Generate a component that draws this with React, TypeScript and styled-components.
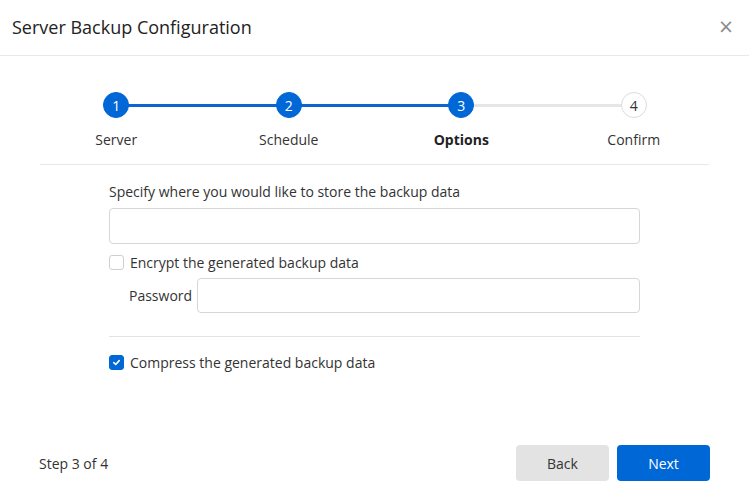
import styled, { createGlobalStyle } from "styled-components";

const GlobalStyle = createGlobalStyle`
  body {
    margin: 0;
    background: #ffffff;
    font-family: "Open Sans", "Noto Sans", sans-serif;
    color: #333333;
  }
`;

const Dialog = styled.div`
  width: 749px;
  height: 504px;
  display: flex;
  flex-direction: column;
  background: #fff;
`;

const Header = styled.div`
  height: 56px;
  box-sizing: border-box;
  display: flex;
  align-items: center;
  justify-content: space-between;
  padding: 0 15px 2px 12px;
  border-bottom: 1px solid #e8e8e8;
`;

const Title = styled.h1`
  margin: 0;
  font-size: 18px;
  font-weight: 400;
  color: #222;
`;

const CloseButton = styled.button`
  border: none;
  background: none;
  padding: 0;
  color: #8a8a8a;
  font-size: 19px;
  line-height: 1;
  cursor: pointer;
  font-family: "DejaVu Sans", sans-serif;
`;

const Body = styled.div`
  flex: 1;
  padding: 36px 40px 0;
  display: flex;
  flex-direction: column;
`;

const StepperWrap = styled.div`
  padding-bottom: 15px;
  border-bottom: 1px solid #e8e8e8;
`;

const Stepper = styled.div`
  display: grid;
  grid-template-columns: repeat(4, 172.5px);
  margin: 0 -10px;
`;

const Step = styled.div`
  display: flex;
  flex-direction: column;
  align-items: center;
  position: relative;
`;

const Connector = styled.div<{ $done: boolean }>`
  position: absolute;
  top: 12px;
  left: 50%;
  width: 100%;
  height: 3px;
  background: ${(p) => (p.$done ? "#0a66cc" : "#e6e6e6")};
`;

const Circle = styled.div<{ $active: boolean }>`
  position: relative;
  z-index: 1;
  width: 26px;
  height: 26px;
  box-sizing: border-box;
  border-radius: 50%;
  display: flex;
  align-items: center;
  justify-content: center;
  font-size: 14px;
  background: ${(p) => (p.$active ? "#0067d6" : "#fff")};
  color: ${(p) => (p.$active ? "#fff" : "#333")};
  border: 1px solid ${(p) => (p.$active ? "#0067d6" : "#dcdcdc")};
`;

const StepLabel = styled.div<{ $current: boolean }>`
  margin-top: 12px;
  font-size: 14px;
  font-weight: ${(p) => (p.$current ? 700 : 400)};
  color: ${(p) => (p.$current ? "#222" : "#333")};
`;

const Form = styled.div`
  width: 531px;
  margin: 17px 0 0 69px;
  display: flex;
  flex-direction: column;
`;

const FieldLabel = styled.label`
  font-size: 14px;
  color: #333;
  margin-bottom: 7px;
`;

const TextInput = styled.input<{ $height: number }>`
  box-sizing: border-box;
  width: 100%;
  height: ${(p) => p.$height}px;
  border: 1px solid #d6d6d6;
  border-radius: 4px;
  background: #fff;
  outline: none;
  font: inherit;
`;

const CheckRow = styled.label<{ $top?: number }>`
  display: flex;
  align-items: center;
  gap: 6px;
  margin-top: ${(p) => p.$top ?? 0}px;
  font-size: 14px;
  color: #333;
`;

const Box = styled.span<{ $checked: boolean }>`
  width: 15px;
  height: 15px;
  box-sizing: border-box;
  border-radius: 3px;
  border: 1px solid ${(p) => (p.$checked ? "#0067d6" : "#cfcfcf")};
  background: ${(p) => (p.$checked ? "#0067d6" : "#fff")};
  display: flex;
  align-items: center;
  justify-content: center;
`;

const PasswordRow = styled.div`
  display: flex;
  align-items: center;
  gap: 5px;
  margin: 6px 0 0 20px;
  font-size: 14px;
  color: #333;
`;

const Divider = styled.hr`
  border: none;
  border-top: 1px solid #e3e3e3;
  margin: 23px 0 16px;
  width: 100%;
`;

const Footer = styled.div`
  height: 94px;
  box-sizing: border-box;
  padding: 12px 39px 0;
  display: flex;
  align-items: center;
  justify-content: space-between;
`;

const StepCount = styled.span`
  font-size: 14px;
  color: #333;
`;

const Buttons = styled.div`
  display: flex;
  gap: 8px;
`;

const Button = styled.button<{ $primary?: boolean }>`
  width: 93px;
  height: 36px;
  border: none;
  border-radius: 4px;
  font: inherit;
  font-size: 14px;
  cursor: pointer;
  background: ${(p) => (p.$primary ? "#0067d6" : "#e3e3e3")};
  color: ${(p) => (p.$primary ? "#fff" : "#333")};
`;

const steps = ["Server", "Schedule", "Options", "Confirm"];
const current = 2;

export default function App() {
  return (
    <>
      <GlobalStyle />
      <Dialog>
        <Header>
          <Title>Server Backup Configuration</Title>
          <CloseButton>×</CloseButton>
        </Header>
        <Body>
          <StepperWrap>
            <Stepper>
              {steps.map((s, i) => (
                <Step key={s}>
                  {i < steps.length - 1 && <Connector $done={i < current} />}
                  <Circle $active={i <= current}>{i + 1}</Circle>
                  <StepLabel $current={i === current}>{s}</StepLabel>
                </Step>
              ))}
            </Stepper>
          </StepperWrap>
          <Form>
            <FieldLabel>Specify where you would like to store the backup data</FieldLabel>
            <TextInput $height={36} />
            <CheckRow $top={9}>
              <Box $checked={false} />
              Encrypt the generated backup data
            </CheckRow>
            <PasswordRow>
              <span>Password</span>
              <TextInput $height={35} type="password" />
            </PasswordRow>
            <Divider />
            <CheckRow>
              <Box $checked>
                <svg width="9" height="9" viewBox="0 0 10 10" fill="none">
                  <path d="M2 5.2 4.1 7.2 8 2.9" stroke="#fff" strokeWidth="1.8" strokeLinecap="round" strokeLinejoin="round" />
                </svg>
              </Box>
              Compress the generated backup data
            </CheckRow>
          </Form>
        </Body>
        <Footer>
          <StepCount>Step 3 of 4</StepCount>
          <Buttons>
            <Button>Back</Button>
            <Button $primary>Next</Button>
          </Buttons>
        </Footer>
      </Dialog>
    </>
  );
}
